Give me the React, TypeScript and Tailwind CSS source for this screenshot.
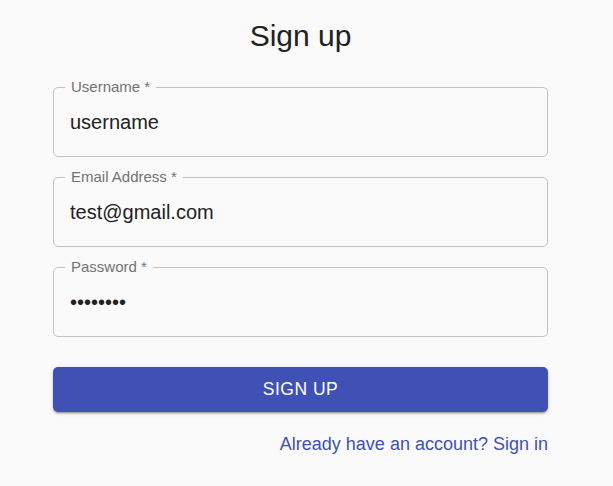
import { useState } from "react";

function Field({
  label,
  value,
  type = "text",
}: {
  label: string;
  value: string;
  type?: string;
}) {
  const [v, setV] = useState(value);
  return (
    <div className="relative h-[70px] rounded-[5px] border border-[#c2c2c2]">
      <label className="absolute -top-[10px] left-[11px] bg-[#fafafa] px-[6px] text-[15px] leading-[17px] text-[#737373]">
        {label} *
      </label>
      <input
        type={type}
        value={v}
        onChange={(e) => setV(e.target.value)}
        className="h-full w-full bg-transparent px-[16px] text-[20px] text-[#222222] outline-none"
      />
    </div>
  );
}

export default function App() {
  const fields = [
    { label: "Username", value: "username" },
    { label: "Email Address", value: "test@gmail.com" },
    { label: "Password", value: "password", type: "password" },
  ];

  return (
    <div
      className="min-h-[486px] bg-[#fafafa] pl-[53px]"
      style={{ fontFamily: '"Liberation Sans", Arial, sans-serif' }}
    >
      <div className="flex w-[495px] flex-col pt-[16px]">
        {/* Title */}
        <h1 className="text-center text-[30px] leading-[40px] text-[#212121]">
          Sign up
        </h1>

        {/* Form */}
        <div className="mt-[31px] flex flex-col gap-[20px]">
          {fields.map((f, idx) => (
            <Field key={idx} label={f.label} value={f.value} type={f.type} />
          ))}
        </div>

        <button className="mt-[30px] h-[45px] rounded-[5px] bg-[#3f51b5] text-[17.5px] uppercase tracking-[0.5px] text-white shadow-[0_3px_1px_-2px_rgba(0,0,0,0.2),0_2px_2px_0_rgba(0,0,0,0.14),0_1px_5px_0_rgba(0,0,0,0.12)]">
          Sign up
        </button>

        <div className="mt-[20px] flex justify-end">
          <a href="#" className="text-[18px] leading-[25px] text-[#3f51b5]">
            Already have an account? Sign in
          </a>
        </div>
      </div>
    </div>
  );
}
